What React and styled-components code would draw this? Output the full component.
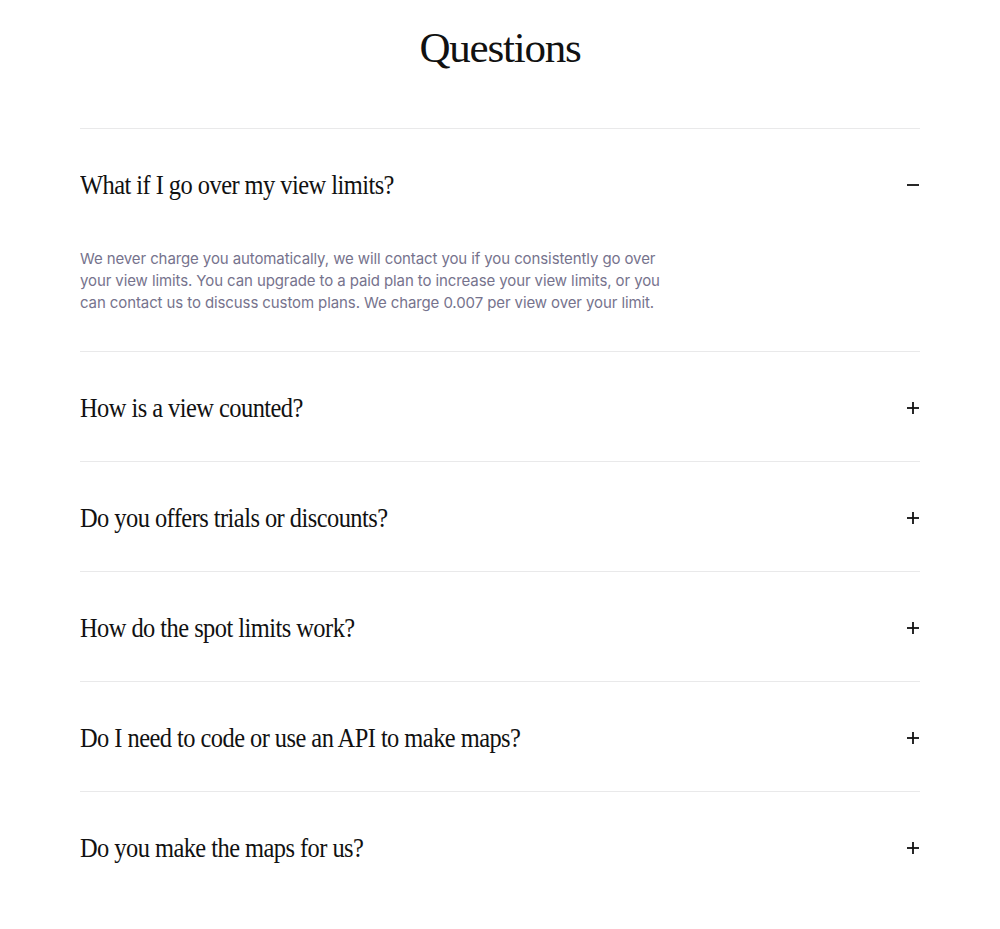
import React, { useState } from "react";
import styled, { createGlobalStyle } from "styled-components";

const Global = createGlobalStyle`
  html, body { margin: 0; padding: 0; background: #fff; }
  * { box-sizing: border-box; }
`;

const Page = styled.main`
  width: 840px;
  margin: 0 auto;
  padding-top: 22px;
`;

const Title = styled.h1`
  margin: 0 0 54px;
  text-align: center;
  font-family: "Liberation Serif", serif;
  font-weight: 400;
  font-size: 43px;
  line-height: 52px;
  letter-spacing: -1.2px;
  color: #111;
`;

const List = styled.div``;

const Item = styled.div`
  border-top: 1px solid #e9e9ea;
`;

const Header = styled.button`
  all: unset;
  box-sizing: border-box;
  width: 100%;
  height: 109px;
  padding-top: 3px;
  display: flex;
  align-items: center;
  justify-content: space-between;
  cursor: pointer;
`;

const Question = styled.span`
  display: inline-block;
  font-family: "Liberation Serif", serif;
  font-size: 27px;
  letter-spacing: -0.6px;
  color: #111;
  transform: scaleX(0.905);
  transform-origin: left center;
`;

const Answer = styled.p`
  margin: 0;
  padding: 10px 0 37px;
  max-width: 600px;
  font-family: "Inter", sans-serif;
  font-size: 15px;
  line-height: 22px;
  letter-spacing: -0.1px;
  color: #76738d;
`;

const IconBox = styled.svg`
  flex: none;
  margin-right: 1px;
`;

const Icon = ({ open }) => (
  <IconBox width="12" height="12" viewBox="0 0 12 12">
    <rect x="0" y="5.1" width="12" height="1.8" fill="#111" />
    {!open && <rect x="5.1" y="0" width="1.8" height="12" fill="#111" />}
  </IconBox>
);

const faqs = [
  {
    q: "What if I go over my view limits?",
    a: "We never charge you automatically, we will contact you if you consistently go over your view limits. You can upgrade to a paid plan to increase your view limits, or you can contact us to discuss custom plans. We charge 0.007 per view over your limit.",
  },
  { q: "How is a view counted?", a: "A view is counted each time a map is loaded on your website." },
  { q: "Do you offers trials or discounts?", a: "Yes, contact us to find out more." },
  { q: "How do the spot limits work?", a: "Each plan includes a number of spots you can add to your maps." },
  { q: "Do I need to code or use an API to make maps?", a: "No, you can create maps without writing any code." },
  { q: "Do you make the maps for us?", a: "We can help you build your maps on custom plans." },
];

export default function App() {
  const [open, setOpen] = useState(0);
  return (
    <>
      <Global />
      <Page>
        <Title>Questions</Title>
        <List>
          {faqs.map((f, i) => (
            <Item key={i}>
              <Header onClick={() => setOpen(open === i ? -1 : i)}>
                <Question>{f.q}</Question>
                <Icon open={open === i} />
              </Header>
              {open === i && <Answer>{f.a}</Answer>}
            </Item>
          ))}
        </List>
      </Page>
    </>
  );
}
